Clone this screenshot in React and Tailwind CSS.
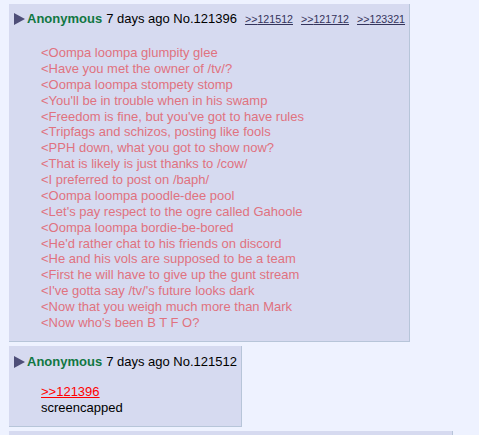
import React from 'react';

const lines = [
    "<Oompa loompa glumpity glee",
    "<Have you met the owner of /tv/?",
    "<Oompa loompa stompety stomp",
    "<You'll be in trouble when in his swamp",
    "<Freedom is fine, but you've got to have rules",
    "<Tripfags and schizos, posting like fools",
    "<PPH down, what you got to show now?",
    "<That is likely is just thanks to /cow/",
    "<I preferred to post on /baph/",
    "<Oompa loompa poodle-dee pool",
    "<Let's pay respect to the ogre called Gahoole",
    "<Oompa loompa bordie-be-bored",
    "<He'd rather chat to his friends on discord",
    "<He and his vols are supposed to be a team",
    "<First he will have to give up the gunt stream",
    "<I've gotta say /tv/'s future looks dark",
    "<Now that you weigh much more than Mark",
    "<Now who's been B T F O?",
];

const Arrow = () => (
    <svg width="11" height="12" viewBox="0 0 11 12" className="shrink-0">
        <polygon points="0,0 11,6 0,12" fill="#4e4e78" />
    </svg>
);

const Header = ({ no, backlinks = [] }) => (
    <div className="flex items-center pl-[5px] leading-[16px] whitespace-nowrap">
        <Arrow />
        <span className="ml-[2px] font-bold text-[#117743]">Anonymous</span>
        <span className="ml-[4px] text-black">7 days ago No.{no}</span>
        {backlinks.map((b) => (
            <a key={b} className="ml-[8px] text-[10.67px] text-[#34345c] underline">
                &gt;&gt;{b}
            </a>
        ))}
    </div>
);

export default function App() {
    return (
        <div className="h-screen bg-[#eef2ff] pt-[4px] pl-[9px] text-[13px] overflow-hidden" style={{ fontFamily: '"Liberation Sans", Arial, sans-serif' }}>
            {/* OP reply with backlinks */}
            <div className="w-fit bg-[#d6daf0] border-r border-b border-[#b7c5d9] pt-[7px] pr-[4px] pb-[10px]">
                <Header no="121396" backlinks={["121512", "121712", "123321"]} />
                <div className="mt-[18px] pl-[32px] leading-[15.88px] text-[#e0727f]">
                    {lines.map((l, i) => (
                        <div key={i}>{l}</div>
                    ))}
                </div>
            </div>

            <div className="mt-[4px] w-fit bg-[#d6daf0] border-r border-b border-[#b7c5d9] pt-[8px] pr-[4px] pb-[10px]">
                <Header no="121512" />
                <div className="mt-[14px] pl-[32px] leading-[16px] text-black">
                    <a className="text-[#ff0000] underline">&gt;&gt;121396</a>
                    <div>screencapped</div>
                </div>
            </div>

            {/* next post, cut off */}
            <div className="mt-[4px] w-[444px] h-[30px] bg-[#d6daf0] border-r border-[#b7c5d9]" />
        </div>
    );
}
